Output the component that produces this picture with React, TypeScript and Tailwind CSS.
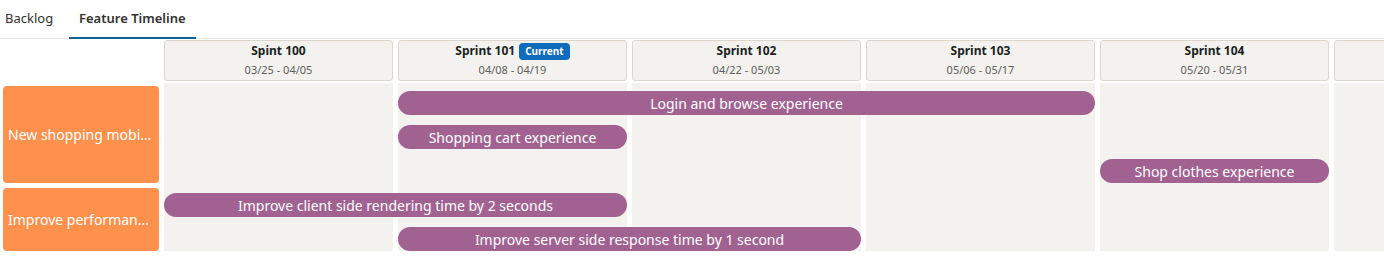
import React from "react";

type Sprint = { name: string; dates: string; current?: boolean };

const sprints: Sprint[] = [
  { name: "Spint 100", dates: "03/25 - 04/05" },
  { name: "Sprint 101", dates: "04/08 - 04/19", current: true },
  { name: "Sprint 102", dates: "04/22 - 05/03" },
  { name: "Sprint 103", dates: "05/06 - 05/17" },
  { name: "Sprint 104", dates: "05/20 - 05/31" },
];

// column index is 2-based (col 1 holds the feature cards)
const bars = [
  { title: "Login and browse experience", cls: "col-start-3 col-span-3 row-start-3" },
  { title: "Shopping cart experience", cls: "col-start-3 col-span-1 row-start-5" },
  { title: "Shop clothes experience", cls: "col-start-6 col-span-1 row-start-7" },
  { title: "Improve client side rendering time by 2 seconds", cls: "col-start-2 col-span-2 row-start-10" },
  { title: "Improve server side response time by 1 second", cls: "col-start-3 col-span-2 row-start-12" },
];

const colStarts = [
  "col-start-2",
  "col-start-3",
  "col-start-4",
  "col-start-5",
  "col-start-6",
  "col-start-7",
];

export default function App() {
  return (
    <div
      className="w-[1384px] h-[278px] overflow-hidden bg-white text-[#323130]"
      style={{ fontFamily: '"Segoe UI", "Noto Sans", "Open Sans", sans-serif' }}
    >
      {/* tabs */}
      <div className="flex h-[39px] items-stretch border-b border-[#edebe9] text-[13px]">
        <div className="flex w-[69px] items-center pl-[5px]">Backlog</div>
        <div className="relative flex items-center px-[10px] font-semibold">
          Feature Timeline
          <div className="absolute bottom-[-1px] left-0 right-0 h-[2px] bg-[#0f6394]" />
        </div>
      </div>

      {/* sprint headers */}
      <div className="grid grid-cols-[159px_repeat(6,229px)] gap-x-[5px] pt-[1px]">
        <div />
        {sprints.map((s) => (
          <div
            key={s.name}
            className="flex h-[41px] flex-col items-center rounded-[3px] border border-[#ddd6cb] bg-[#f3f2ee]"
          >
            <div className="flex h-[20px] items-center gap-[4px] text-[12px] font-bold text-[#201f1e]">
              {s.name}
              {s.current && (
                <span className="rounded-[4px] bg-[#0f6cbd] px-[6px] py-[1px] text-[10px] font-bold leading-[15px] text-white">
                  Current
                </span>
              )}
            </div>
            <div className="mt-[1px] text-[11px] text-[#605e5c]">{s.dates}</div>
          </div>
        ))}
        <div className="h-[41px] rounded-[3px] border border-[#ddd6cb] bg-[#f3f2ee]" />
      </div>

      {/* timeline body */}
      <div className="mt-[2px] grid grid-cols-[159px_repeat(6,229px)] grid-rows-[3px_5px_24px_10px_24px_10px_24px_5px_5px_24px_10px_24px] gap-x-[5px]">
        {colStarts.map((c) => (
          <div key={c} className={`${c} row-start-1 row-span-12 bg-[#f3f2ee]`} />
        ))}

        <div className="col-start-1 row-start-2 row-span-6 ml-[3px] flex items-center overflow-hidden rounded-[4px] bg-[#ff914d] px-[5px] text-[14px] text-white">
          <span className="truncate">New shopping mobile app experience</span>
        </div>
        <div className="col-start-1 row-start-9 row-span-4 ml-[3px] flex items-center overflow-hidden rounded-[4px] bg-[#ff914d] px-[5px] text-[14px] text-white">
          <span className="truncate">Improve performance of the site</span>
        </div>

        {bars.map((b) => (
          <div
            key={b.title}
            className={`${b.cls} flex items-center justify-center rounded-full bg-[#a16292] text-[14px] text-white`}
          >
            <span className="truncate">{b.title}</span>
          </div>
        ))}
      </div>
    </div>
  );
}
